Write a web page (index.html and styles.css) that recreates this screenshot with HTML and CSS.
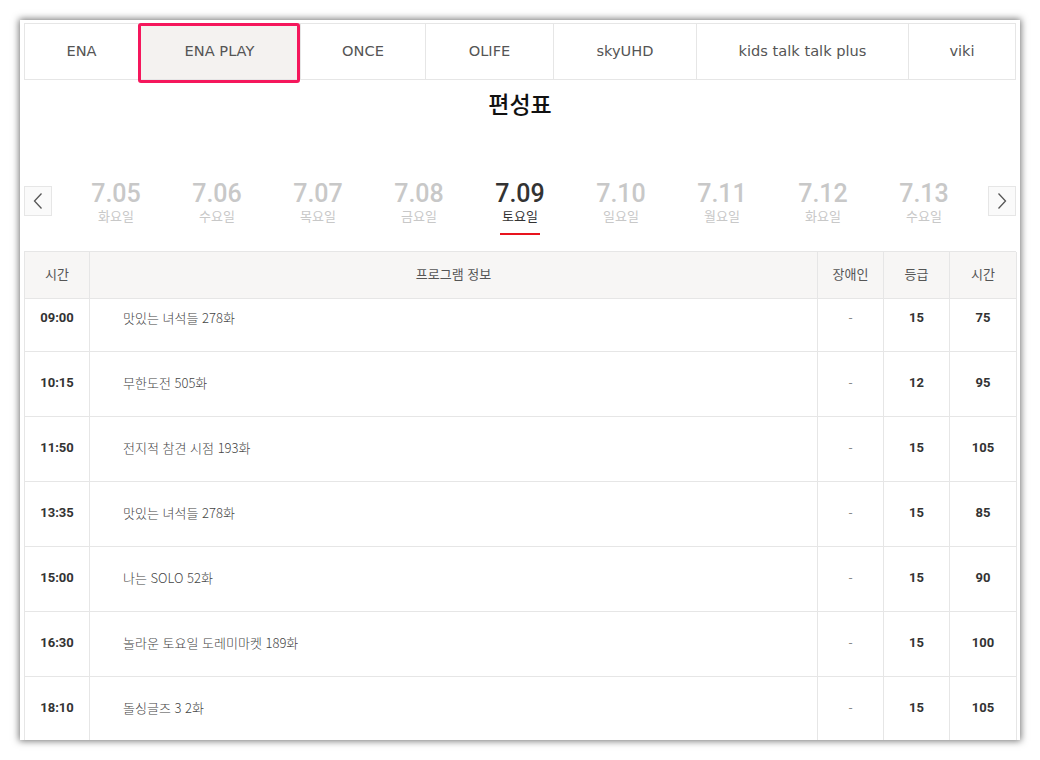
FILE: index.html
```html
<!DOCTYPE html>
<html lang="ko">
<head>
<meta charset="utf-8">
<title>편성표</title>
<link rel="stylesheet" href="styles.css">
</head>
<body>
<div class="frame">
  <nav class="tabs">
    <div class="tab w1">ENA</div>
    <div class="tab w2 active">ENA PLAY</div>
    <div class="tab w3">ONCE</div>
    <div class="tab w4">OLIFE</div>
    <div class="tab w5">skyUHD</div>
    <div class="tab w6">kids talk talk plus</div>
    <div class="tab w7">viki</div>
  </nav>

  <h1 class="title">편성표</h1>

  <div class="dates">
    <button class="arrow" aria-label="이전">
      <svg width="10" height="18" viewBox="0 0 10 18"><path d="M8.5 1.5 L1.5 9 L8.5 16.5" fill="none" stroke="#555" stroke-width="1.3"/></svg>
    </button>
    <ul class="date-list">
      <li class="date"><span class="num">7.05</span><span class="day">화요일</span></li>
      <li class="date"><span class="num">7.06</span><span class="day">수요일</span></li>
      <li class="date"><span class="num">7.07</span><span class="day">목요일</span></li>
      <li class="date"><span class="num">7.08</span><span class="day">금요일</span></li>
      <li class="date on"><span class="num">7.09</span><span class="day">토요일</span></li>
      <li class="date"><span class="num">7.10</span><span class="day">일요일</span></li>
      <li class="date"><span class="num">7.11</span><span class="day">월요일</span></li>
      <li class="date"><span class="num">7.12</span><span class="day">화요일</span></li>
      <li class="date"><span class="num">7.13</span><span class="day">수요일</span></li>
    </ul>
    <button class="arrow" aria-label="다음">
      <svg width="10" height="18" viewBox="0 0 10 18"><path d="M1.5 1.5 L8.5 9 L1.5 16.5" fill="none" stroke="#555" stroke-width="1.3"/></svg>
    </button>
  </div>

  <div class="table">
    <div class="row head">
      <div class="c">시간</div>
      <div class="c">프로그램 정보</div>
      <div class="c">장애인</div>
      <div class="c">등급</div>
      <div class="c">시간</div>
    </div>
    <div class="row first">
      <div class="c time">09:00</div>
      <div class="c prog">맛있는 녀석들 278화</div>
      <div class="c dash">-</div>
      <div class="c val">15</div>
      <div class="c val">75</div>
    </div>
    <div class="row">
      <div class="c time">10:15</div>
      <div class="c prog">무한도전 505화</div>
      <div class="c dash">-</div>
      <div class="c val">12</div>
      <div class="c val">95</div>
    </div>
    <div class="row">
      <div class="c time">11:50</div>
      <div class="c prog">전지적 참견 시점 193화</div>
      <div class="c dash">-</div>
      <div class="c val">15</div>
      <div class="c val">105</div>
    </div>
    <div class="row">
      <div class="c time">13:35</div>
      <div class="c prog">맛있는 녀석들 278화</div>
      <div class="c dash">-</div>
      <div class="c val">15</div>
      <div class="c val">85</div>
    </div>
    <div class="row">
      <div class="c time">15:00</div>
      <div class="c prog">나는 SOLO 52화</div>
      <div class="c dash">-</div>
      <div class="c val">15</div>
      <div class="c val">90</div>
    </div>
    <div class="row">
      <div class="c time">16:30</div>
      <div class="c prog">놀라운 토요일 도레미마켓 189화</div>
      <div class="c dash">-</div>
      <div class="c val">15</div>
      <div class="c val">100</div>
    </div>
    <div class="row">
      <div class="c time">18:10</div>
      <div class="c prog">돌싱글즈 3 2화</div>
      <div class="c dash">-</div>
      <div class="c val">15</div>
      <div class="c val">105</div>
    </div>
  </div>
</div>
</body>
</html>
```

FILE: styles.css
```css
*, *::before, *::after { box-sizing: border-box; }

html, body {
  margin: 0;
  padding: 0;
  background: #ffffff;
}

body {
  font-family: Roboto, "Noto Sans CJK KR", sans-serif;
  color: #333;
  padding: 20px;
}

.frame {
  width: 1000px;
  height: 720px;
  background: #fff;
  padding: 3px 4px 0 4px;
  overflow: hidden;
  box-shadow: 0 0 7px 1px rgba(0, 0, 0, 0.55);
  position: relative;
}

/* channel tabs */
.tabs {
  display: flex;
  height: 57px;
  border: 1px solid #e6e6e6;
}

.tab {
  display: flex;
  align-items: center;
  justify-content: center;
  border-right: 1px solid #e6e6e6;
  font-family: "DejaVu Sans", sans-serif;
  font-size: 14.6px;
  color: #555;
  position: relative;
  padding-bottom: 2px;
}
.tab:last-child { border-right: 0; }

.w1 { width: 114px; }
.w2 { width: 162px; }
.w3 { width: 125px; }
.w4 { width: 128px; }
.w5 { width: 143px; }
.w6 { width: 212px; }
.w7 { flex: 1; }

.tab.active {
  background: #f4f2f0;
}
.tab.active::after {
  content: "";
  position: absolute;
  left: -1px;
  top: -1px;
  width: 162px;
  height: 60px;
  border: 3px solid #f5175c;
  border-radius: 3px;
}

/* title */
.title {
  margin: 8px 0 0;
  text-align: center;
  font-family: "Noto Sans CJK KR", sans-serif;
  font-weight: 500;
  font-size: 23px;
  line-height: 30px;
  color: #111;
}

/* date navigation */
.dates {
  display: flex;
  align-items: flex-start;
  margin-top: 63px;
}

.arrow {
  width: 28px;
  height: 30px;
  margin-top: 5px;
  border: 1px solid #e6e6e6;
  background: #fafafa;
  display: flex;
  align-items: center;
  justify-content: center;
  padding: 0;
}

.date-list {
  flex: 1;
  display: flex;
  justify-content: center;
  list-style: none;
  margin: 0;
  padding: 0;
}

.date {
  width: 101px;
  display: flex;
  flex-direction: column;
  align-items: center;
  color: #c8c8c8;
}

.num {
  font-family: Roboto, sans-serif;
  font-weight: 500;
  font-size: 25px;
  line-height: 26px;
}

.day {
  font-family: "Noto Sans CJK KR", sans-serif;
  font-size: 13px;
  line-height: 18px;
  padding-bottom: 9px;
  position: relative;
}

.date.on { color: #333; }
.date.on .day::after {
  content: "";
  position: absolute;
  left: -2px;
  right: -2px;
  bottom: -1px;
  height: 2px;
  background: #e8141e;
}

/* schedule table */
.table {
  margin-top: 17px;
  border-top: 1px solid #e6e6e6;
  border-left: 1px solid #e6e6e6;
}

.row {
  display: grid;
  grid-template-columns: 65px 728px 66px 66px 67px;
  height: 65px;
}

.row .c {
  display: flex;
  align-items: center;
  justify-content: center;
  border-right: 1px solid #e6e6e6;
  border-bottom: 1px solid #e6e6e6;
  font-size: 13px;
  padding-bottom: 3px;
}

.row.head {
  height: 47px;
  background: #f7f6f5;
}
.row.head .c {
  font-family: "Noto Sans CJK KR", sans-serif;
  color: #555;
  font-size: 13px;
}

.row.first { height: 53px; }
.row.first .c { padding-bottom: 15px; }

.c.time {
  font-weight: 700;
  color: #333;
}

.c.prog {
  justify-content: flex-start;
  padding-left: 33px;
  font-family: "Noto Sans CJK KR", sans-serif;
  font-weight: 300;
  color: #444;
}

.c.dash { color: #888; }

.c.val {
  font-weight: 700;
  color: #333;
}
```
